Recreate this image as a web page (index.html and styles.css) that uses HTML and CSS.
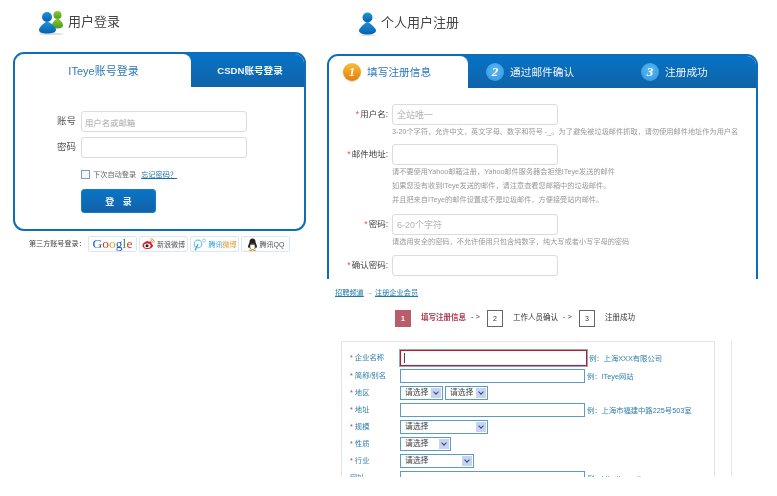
FILE: index.html
```html
<!DOCTYPE html>
<html lang="zh">
<head>
<meta charset="utf-8">
<title>用户登录 / 注册</title>
<link rel="stylesheet" href="styles.css">
</head>
<body>
<svg width="0" height="0" class="defs">
  <defs>
    <linearGradient id="gb" x1="0" y1="0" x2="0" y2="1"><stop offset="0" stop-color="#1f93dc"/><stop offset="1" stop-color="#0660ab"/></linearGradient>
    <linearGradient id="gg" x1="0" y1="0" x2="0" y2="1"><stop offset="0" stop-color="#8fcb3a"/><stop offset="1" stop-color="#4e9a1c"/></linearGradient>
  </defs>
</svg>
<div class="page">
  <section class="left">
    <header class="title title-login">
      <svg class="ico-users" width="26" height="25" viewBox="0 0 26 25">
        <ellipse cx="13" cy="24" rx="12.500" ry="1" fill="#dcdcdc"/>
        <circle cx="19.500" cy="5" r="4" fill="url(#gg)"/>
        <path d="M19.500 8c-1 1-2 1.500-3 2.500-1.500 1.500-2.500 3-2.500 5 0 2 2 3 5.500 3s5.500-1 5.500-3c0-2-1-3.500-2.500-5-1-1-2-1.500-3-2.500z" fill="url(#gg)"/>
        <circle cx="9" cy="7" r="5" fill="url(#gb)"/>
        <path d="M9 11c-1.500 1.500-3 2-5 4-2 2-3 3.500-3 5 0 2.500 3 3.500 8 3.500s9-1 9-3.500c0-1.500-1-3-3-5-2-2-4.500-2.500-6-4z" fill="url(#gb)"/>
      </svg>
      <h2>用户登录</h2>
    </header>
    <div class="panel login">
      <div class="tabs">
        <div class="tab on login-tab">ITeye账号登录</div>
        <div class="tab off login-off">CSDN账号登录</div>
      </div>
      <div class="login-body">
        <div class="lrow"><label>账号</label><div class="inp ph">用户名或邮箱</div></div>
        <div class="lrow"><label>密码</label><div class="inp"></div></div>
        <div class="auto"><span class="chk"></span><span>下次自动登录</span><a href="#">忘记密码？</a></div>
        <button class="btn">登 录</button>
      </div>
    </div>
    <div class="third">
      <span class="third-label">第三方账号登录：</span>
      <span class="tp goog"><b class="c1">G</b><b class="c2">o</b><b class="c3">o</b><b class="c1">g</b><b class="c4">l</b><b class="c2">e</b></span>
      <span class="tp">
        <svg width="13" height="12" viewBox="0 0 13 12"><path d="M5.500 3C2.500 3.500 .5 5.500.5 7.500c0 2 2.500 3.500 5 3.500 3 0 5.500-1.800 5.500-3.500 0-1-1-1.500-1.500-1.800.5-1.200 0-2.700-2-2.200l-1 .4C6.500 2.800 6 3 5.500 3z" fill="#d8232c"/><ellipse cx="5.300" cy="7.700" rx="3.200" ry="2.300" fill="#fff"/><circle cx="5" cy="7.800" r="1.500" fill="#222"/><path d="M8.500.8c2.200-.3 4 1.700 3.500 4M8.800 2.500c1-.1 1.800.8 1.600 1.800" fill="none" stroke="#f08c1e" stroke-width="1"/></svg>
        <i class="tpt">新浪微博</i>
      </span>
      <span class="tp">
        <svg width="14" height="13" viewBox="0 0 14 13"><circle cx="5" cy="6" r="3.800" fill="none" stroke="#7cc4e8" stroke-width="1.200"/><path d="M2 12.500 5 6" stroke="#3fa3d8" stroke-width="1.200"/><circle cx="11" cy="2.500" r="1.500" fill="none" stroke="#9dd0ea"/></svg>
        <i class="tpt"><em class="tb">腾讯</em><em class="to">微博</em></i>
      </span>
      <span class="tp">
        <svg width="11" height="13" viewBox="0 0 11 13"><path d="M5.500.5c2 0 3 1.500 3 3.500 0 1 1.500 3 1.500 5 0 1-.7 1-1.200.3-.3 1.200-1.300 2.200-3.300 2.200s-3-1-3.300-2.200C1.700 10 1 10 1 9c0-2 1.500-4 1.500-5 0-2 1-3.500 3-3.500z" fill="#222"/><path d="M3.500 6.500c1.500.6 2.500.6 4 0 .5 1.500.5 3-.3 4.500H3.800c-.8-1.500-.8-3-.3-4.500z" fill="#fff"/><path d="M2 12c1 .6 2 .6 3 .2M6 12.200c1 .4 2 .4 3-.2" stroke="#f0a010" stroke-width="1.300" fill="none"/><path d="M3.800 5.700h3.400l-1.700 1z" fill="#f0a010"/></svg>
        <i class="tpt">腾讯QQ</i>
      </span>
    </div>
  </section>

  <section class="right">
    <header class="title title-reg">
      <svg class="ico-user" width="19" height="24" viewBox="0 0 19 24">
        <ellipse cx="9.500" cy="23.200" rx="9" ry=".8" fill="#dcdcdc"/>
        <circle cx="9.500" cy="5.500" r="5" fill="url(#gb)"/>
        <path d="M9.500 9.500c-1.500 1.500-3 2-5 4-2 2-3.500 3.500-3.500 5 0 2.500 3.500 4 8.500 4s8.500-1.500 8.500-4c0-1.500-1.500-3-3.500-5-2-2-3.500-2.500-5-4z" fill="url(#gb)"/>
      </svg>
      <h2>个人用户注册</h2>
    </header>
    <div class="panel reg">
      <div class="tabs">
        <div class="tab on reg-tab">
          <span class="num orange">1</span><span class="lift">填写注册信息</span>
        </div>
        <div class="tab off reg-off">
          <div class="step s2"><span class="num sky">2</span><span class="lift">通过邮件确认</span></div>
          <div class="step"><span class="num sky">3</span><span class="lift">注册成功</span></div>
        </div>
      </div>
      <div class="reg-body">
        <div class="frow first"><label><i>*</i>用户名:</label><div class="inp ph ph2">全站唯一</div></div>
        <p class="hint">3-20个字符，允许中文，英文字母、数字和符号 -_。为了避免被垃圾邮件抓取，请勿使用邮件地址作为用户名</p>
        <div class="frow m5"><label><i>*</i>邮件地址:</label><div class="inp"></div></div>
        <p class="hint">请不要使用Yahoo邮箱注册，Yahoo邮件服务器会拒绝ITeye发送的邮件</p>
        <p class="hint">如果您没有收到ITeye发送的邮件，请注意查看您邮箱中的垃圾邮件。</p>
        <p class="hint">并且把来自ITeye的邮件设置成不是垃圾邮件，方便接受站内邮件。</p>
        <div class="frow m7"><label><i>*</i>密码:</label><div class="inp ph ph2">6-20个字符</div></div>
        <p class="hint">请选用安全的密码，不允许使用只包含纯数字，纯大写或者小写字母的密码</p>
        <div class="frow m6"><label><i>*</i>确认密码:</label><div class="inp"></div></div>
      </div>
    </div>

    <div class="corp">
      <div class="crumb"><a href="#">招聘频道</a> → <a href="#">注册企业会员</a></div>
      <div class="steps">
        <span class="box cur">1</span><span class="st cur-t">填写注册信息</span><span class="arr">- &gt;</span>
        <span class="box">2</span><span class="st">工作人员确认</span><span class="arr">- &gt;</span>
        <span class="box">3</span><span class="st">注册成功</span>
      </div>
      <div class="corp-wrap">
        <div class="corp-form">
          <div class="crow r1"><label><i>*</i> 企业名称</label><div class="ci focus"><span class="caret"></span></div><span class="eg">例：上海XXX有限公司</span></div>
          <div class="crow"><label><i>*</i> 简称/别名</label><div class="ci"></div><span class="eg">例：ITeye网站</span></div>
          <div class="crow"><label><i>*</i> 地区</label><div class="sel w1">请选择<span class="dd"></span></div><div class="sel w1 gap">请选择<span class="dd"></span></div></div>
          <div class="crow"><label><i>*</i> 地址</label><div class="ci"></div><span class="eg">例：上海市福建中路225号503室</span></div>
          <div class="crow"><label><i>*</i> 规模</label><div class="sel w2">请选择<span class="dd"></span></div></div>
          <div class="crow"><label><i>*</i> 性质</label><div class="sel w3">请选择<span class="dd"></span></div></div>
          <div class="crow"><label><i>*</i> 行业</label><div class="sel w4">请选择<span class="dd"></span></div></div>
          <div class="crow"><label>网址</label><div class="ci"></div><span class="eg">例：http://www.iteye.com</span></div>
        </div>
        <div class="corp-side"></div>
      </div>
    </div>
  </section>
</div>
</body>
</html>
```
FILE: styles.css
```css
* { box-sizing: border-box; }
html, body { margin: 0; padding: 0; background: #fff; }
body {
  width: 777px;
  height: 496px;
  overflow: hidden;
  font-family: "Liberation Sans", "Noto Sans CJK SC", sans-serif;
  color: #555;
}
.defs { position: absolute; }
.page { display: flex; align-items: flex-start; filter: blur(0.4px); }
a { color: #1a6ea8; text-decoration: underline; }
i, em { font-style: normal; }
p { margin: 0; }

.left { width: 327px; padding-left: 13px; flex: none; }
.right { width: 450px; flex: none; }

.title { display: flex; height: 52px; align-items: flex-start; }
.title h2 { margin: 0; font-weight: 400; color: #444; font-size: 13px; line-height: 16px; }
.title-login { padding: 8px 0 0 25px; }
.title-login svg { margin-top: 2px; }
.title-login h2 { margin: 6px 0 0 4px; }
.title-reg { padding: 10px 0 0 31px; height: 54px; }
.title-reg svg { margin-top: 2px; }
.title-reg h2 { margin: 5px 0 0 4px; }

.panel { border: 2px solid #0f6db6; border-radius: 11px; background: #fff; overflow: hidden; }
.tabs { display: flex; background: linear-gradient(#0673c6, #1163a8); height: 33px; }
.tab { height: 33px; display: flex; align-items: center; }
.tab.on { background: #fff; border-radius: 0 8px 0 0; color: #2f78b8; }
.tab.off { color: #f0f6fb; flex: 1; }
.lift { padding-bottom: 2px; }

.login { width: 293px; height: 179px; }
.login-tab { width: 176px; justify-content: center; font-size: 11px; padding: 0 0 2px 1px; }
.login-off { justify-content: center; font-size: 9.600px; font-weight: 700; padding: 0 0 2px 5px; }
.login-body { padding: 24px 0 0 66px; }
.lrow { display: flex; align-items: center; height: 21px; margin-bottom: 5px; position: relative; }
.lrow label { position: absolute; left: -24px; width: 20px; margin-bottom: 3px; font-size: 9.500px; color: #555; }
.inp {
  width: 166px; height: 21px; border: 1px solid #dcdcdc; border-radius: 3px;
  font-size: 8.400px; display: flex; align-items: center; padding-left: 3px; color: #aaa; background: #fff;
  box-shadow: inset 0 0 1px #eee;
}
.ph2 { font-size: 9px; padding-left: 4px; color: #b5b5b5; }
.auto { display: flex; align-items: center; height: 10px; margin-top: 11px; font-size: 7.200px; color: #666; }
.chk { width: 9px; height: 9px; border: 1px solid #7f9db9; background: #f4f6f8; margin-right: 3px; }
.auto a { margin-left: 5px; font-size: 7.200px; }
.btn {
  display: block; margin-top: 10px; width: 75px; height: 24px; padding: 0; border: 1px solid #0f7fcd;
  border-radius: 3px; background: linear-gradient(#0a74c6, #1262a8); color: #e8f2fa;
  font: 700 9px "Liberation Sans", "Noto Sans CJK SC", sans-serif; word-spacing: 6px;
}

.third { display: flex; align-items: center; height: 16px; margin-top: 5px; padding-left: 16px; gap: 2px; }
.third-label { width: 57px; padding-bottom: 2px; font-size: 7.100px; color: #444; white-space: nowrap; }
.tp {
  width: 49px; height: 16px; border: 1px solid #dde7f1; border-radius: 2px; background: #fbfcfe;
  display: flex; align-items: center; justify-content: center; gap: 2px;
}
.tpt { font-size: 7px; color: #555; white-space: nowrap; }
.tb { color: #35a5d5; }
.to { color: #e9992f; }
.goog { font-family: "Liberation Serif", serif; font-size: 13.500px; gap: 0; }
.goog b { font-weight: 400; }
.c1 { color: #2c58c8; }
.c2 { color: #d4382b; }
.c3 { color: #e2a81f; }
.c4 { color: #3e9a3e; }

.reg { width: 431px; height: 225px; border-bottom: 0; border-radius: 11px 11px 0 0; }
.reg .tabs { height: 32px; }
.reg .tab { height: 32px; }
.reg-tab { width: 139px; font-size: 10.700px; padding-left: 14px; gap: 6px; color: #3a80bd; }
.reg-off { font-size: 10.700px; padding-left: 18px; }
.step { display: flex; align-items: center; gap: 6px; }
.s2 { width: 155px; }
.num {
  width: 18px; height: 18px; border-radius: 50%; display: flex; align-items: center; justify-content: center;
  color: #fff; font: italic 700 13px "Liberation Serif", serif;
}
.orange { background: linear-gradient(#fbbd36, #e27f08); box-shadow: 0 1px 1px #d8d8d8; color: #fff6df; }
.sky { background: radial-gradient(circle at 50% 40%, #5cb8f2, #2f95e0); }

.reg-body { display: flex; flex-direction: column; }
.frow { display: flex; align-items: center; height: 21px; }
.first { margin-top: 16px; }
.m5 { margin-top: 5px; }
.m6 { margin-top: 6px; }
.m7 { margin-top: 7px; }
.frow label {
  width: 59px; margin-right: 4px; padding-bottom: 3px; text-align: right; white-space: nowrap; font-size: 8.500px; color: #444;
}
.frow label i { color: #e8552b; margin-right: 1px; }
.hint { padding-left: 63px; font-size: 7.200px; line-height: 14px; color: #999; white-space: nowrap; }

.corp { height: 198px; overflow: hidden; }
.crumb { margin-top: 7px; padding-left: 8px; height: 13px; font-size: 7.200px; line-height: 13px; color: #777; }
.crumb a { color: #1f78a8; }
.steps { display: flex; align-items: center; height: 18px; margin-top: 10px; padding-left: 68px; font-size: 7.500px; color: #333; }
.box { width: 16px; height: 17px; border: 1px solid #666; display: flex; align-items: center; justify-content: center; font-size: 7px; }
.cur { background: #b95d6c; border-color: #b95d6c; color: #fff; font-weight: 700; }
.st { margin-left: 10px; padding-bottom: 3px; }
.cur-t { color: #a83c50; font-weight: 700; }
.arr { margin: 0 7px 0 5px; padding-bottom: 3px; }

.corp-wrap { display: flex; margin-top: 14px; margin-left: 14px; }
.corp-form { width: 374px; height: 160px; border: 1px solid #e3e3e3; padding: 8px 0 0 8px; }
.corp-side { width: 1px; height: 160px; background: #e8e8e8; margin-left: 16px; }
.crow { display: flex; align-items: center; height: 14px; margin-bottom: 3px; position: relative; padding-left: 50px; }
.crow.r1 { height: 16px; }
.crow label { position: absolute; left: 0; margin-bottom: 2px; font-size: 7.300px; color: #2f7fa8; white-space: nowrap; }
.crow label i { color: #d8352a; }
.ci { width: 185px; height: 14px; border: 1px solid #5a9cc4; background: #fff; flex: none; }
.focus { width: 187px; height: 16px; border: 1px solid #c8141e; outline: 1px solid #7fb0d0; display: flex; align-items: center; padding-left: 3px; }
.caret { width: 1px; height: 10px; background: #444; }
.eg { margin-left: 2px; padding-bottom: 1px; font-size: 7.300px; color: #2f7fa8; white-space: nowrap; }
.sel {
  height: 14px; border: 1px solid #5a9cc4; font-size: 7.800px; line-height: 12px; color: #444; display: flex; align-items: center;
  justify-content: space-between; padding: 0 1px 0 4px; background: #fff; flex: none;
}
.gap { margin-left: 2px; }
.w1 { width: 43px; }
.w2 { width: 88px; }
.w3 { width: 51px; }
.w4 { width: 74px; }
.dd { width: 10px; height: 10px; background: #c6d4f2; position: relative; }
.dd::after {
  content: ""; position: absolute; left: 3px; top: 2px; width: 3px; height: 3px;
  border-right: 1px solid #33477a; border-bottom: 1px solid #33477a; transform: rotate(45deg);
}
```
